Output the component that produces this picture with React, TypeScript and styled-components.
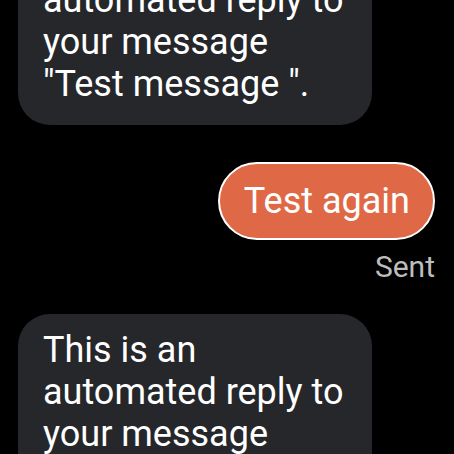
import React from 'react';
import styled, { createGlobalStyle } from 'styled-components';

const GlobalStyle = createGlobalStyle`
  html, body {
    margin: 0;
    padding: 0;
    background: #000;
    overflow: hidden;
  }
  body {
    font-family: Roboto, "Noto Sans", sans-serif;
  }
`;

interface Message {
  id: number;
  text: string;
  outgoing?: boolean;
  status?: string;
}

const messages: Message[] = [
  { id: 1, text: 'This is an automated reply to your message "Test message ".' },
  { id: 2, text: 'Test again', outgoing: true, status: 'Sent' },
  { id: 3, text: 'This is an automated reply to your message "Test again".' },
];

export default function App(): JSX.Element {
  return <>
    <GlobalStyle />
    <Screen>
      <Thread>
        {messages.map((m) => (
          <Row key={m.id} $outgoing={!!m.outgoing}>
            <Bubble $outgoing={!!m.outgoing}>{m.text}</Bubble>
            {m.status && <Status>{m.status}</Status>}
          </Row>
        ))}
      </Thread>
    </Screen>
  </>;
}

const Screen = styled.div`
  width: 454px;
  height: 454px;
  overflow: hidden;
  background: #000;
`;

const Thread = styled.div`
  display: flex;
  flex-direction: column;
  gap: 30px;
  padding: 0 19px 0 18px;
  margin-top: -78px;
`;

const Row = styled.div<{ $outgoing: boolean }>`
  display: flex;
  flex-direction: column;
  align-items: ${(p) => (p.$outgoing ? 'flex-end' : 'flex-start')};
  gap: 9px;
  margin-top: ${(p) => (p.$outgoing ? '7px' : '0')};
`;

const Bubble = styled.div<{ $outgoing: boolean }>`
  box-sizing: border-box;
  max-width: 354px;
  font-size: 36px;
  line-height: 42px;
  color: #fff;
  border-radius: ${(p) => (p.$outgoing ? '40px' : '32px')};
  padding: ${(p) => (p.$outgoing ? '16px 23px 16px 24px' : '15px 24px 20px 25px')};
  background: ${(p) => (p.$outgoing ? '#df6946' : '#25272b')};
  border: ${(p) => (p.$outgoing ? '2px solid #fff' : 'none')};
  white-space: pre-wrap;
`;

const Status = styled.div`
  font-size: 30px;
  line-height: 35px;
  color: #bdbdbd;
`;
